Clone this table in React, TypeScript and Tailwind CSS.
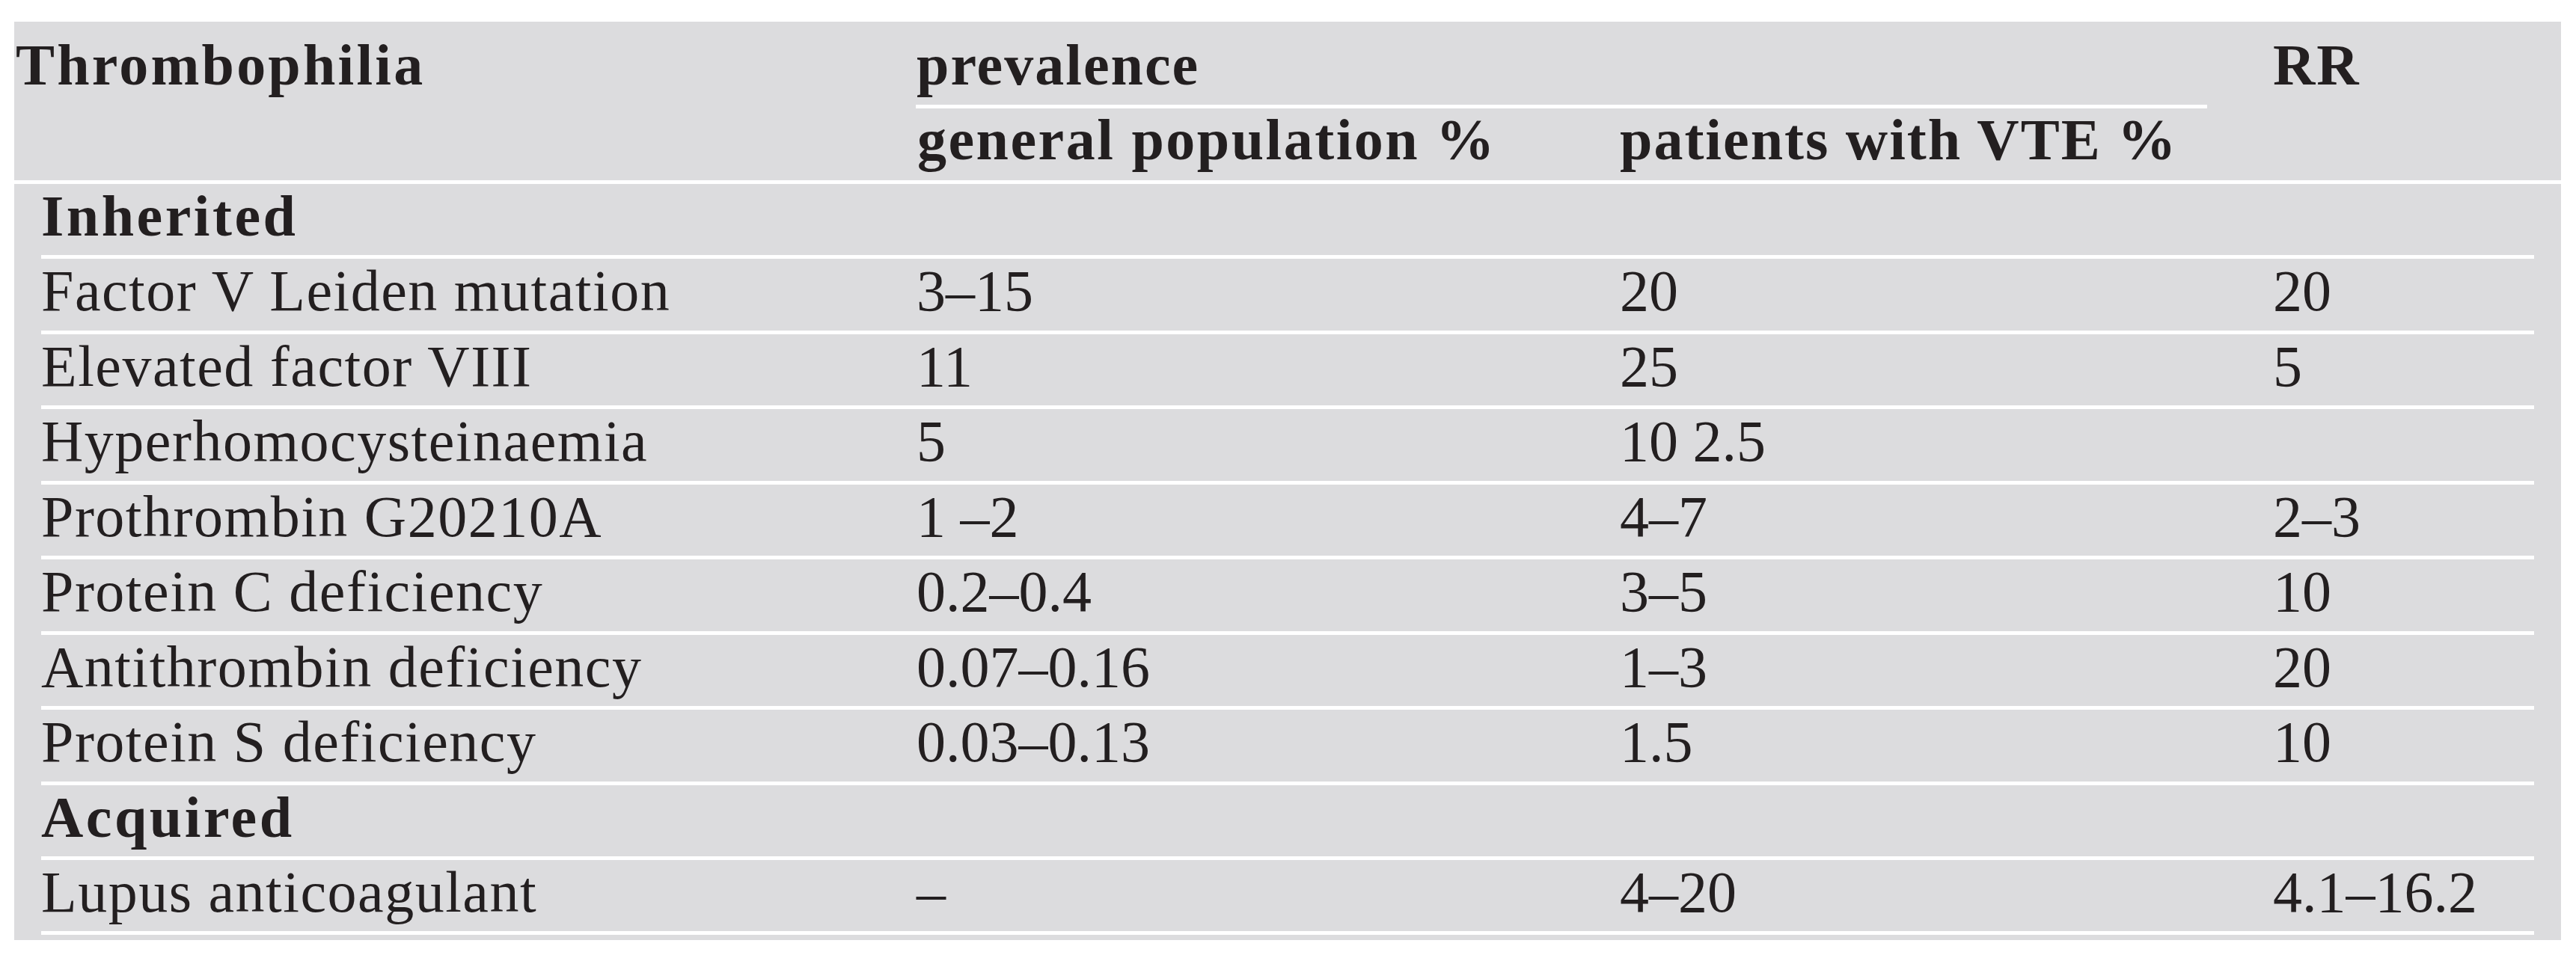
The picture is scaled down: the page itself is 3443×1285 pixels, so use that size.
type Row = {
  label: string;
  group?: boolean;
  general?: string;
  vte?: string;
  rr?: string;
};

const rows: Row[] = [
  { label: 'Inherited', group: true },
  { label: 'Factor V Leiden mutation', general: '3–15', vte: '20', rr: '20' },
  { label: 'Elevated factor VIII', general: '11', vte: '25', rr: '5' },
  { label: 'Hyperhomocysteinaemia', general: '5', vte: '10 2.5', rr: '' },
  { label: 'Prothrombin G20210A', general: '1 –2', vte: '4–7', rr: '2–3' },
  { label: 'Protein C deficiency', general: '0.2–0.4', vte: '3–5', rr: '10' },
  { label: 'Antithrombin deficiency', general: '0.07–0.16', vte: '1–3', rr: '20' },
  { label: 'Protein S deficiency', general: '0.03–0.13', vte: '1.5', rr: '10' },
  { label: 'Acquired', group: true },
  { label: 'Lupus anticoagulant', general: '–', vte: '4–20', rr: '4.1–16.2' },
];

function BodyRow({ row }: { row: Row }) {
  if (row.group) {
    return (
      <div className="ml-[36px] w-[3332px] h-[100.44px] border-b-[5px] border-white pt-[4px]">
        <span className="font-bold tracking-[3.5px]">{row.label}</span>
      </div>
    );
  }
  return (
    <div className="ml-[36px] w-[3332px] h-[100.44px] border-b-[5px] border-white pt-[4px] grid grid-cols-[1170px_940px_873px_1fr]">
      <div className="tracking-[1.5px]">{row.label}</div>
      <div>{row.general}</div>
      <div>{row.vte}</div>
      <div>{row.rr}</div>
    </div>
  );
}

export default function App() {
  return (
    <div className="w-[3443px] h-[1285px] bg-white pt-[29px] pl-[19px] font-['Liberation_Serif','Times_New_Roman',serif] text-[#231f20] text-[78px] leading-[78px]">
      <div className="w-[3404px] bg-[#dcdcde] pb-[7px]">
        {/* header */}
        <div className="h-[217px] border-b-[5px] border-white flex font-bold tracking-[2px]">
          <div className="w-[1205px] pl-[2px] pt-[19px] tracking-[3.2px]">Thrombophilia</div>
          <div className="w-[1726px]">
            <div className="h-[116px] border-b-[5px] border-white pl-[1px] pt-[19px]">prevalence</div>
            <div className="flex pt-[3px]">
              <div className="w-[941px] pl-[2px] tracking-[2.5px]">general population %</div>
              <div>patients with VTE %</div>
            </div>
          </div>
          <div className="pl-[88px] pt-[19px]">RR</div>
        </div>

        {rows.map((row) => (
          <BodyRow key={row.label} row={row} />
        ))}
      </div>
    </div>
  );
}
